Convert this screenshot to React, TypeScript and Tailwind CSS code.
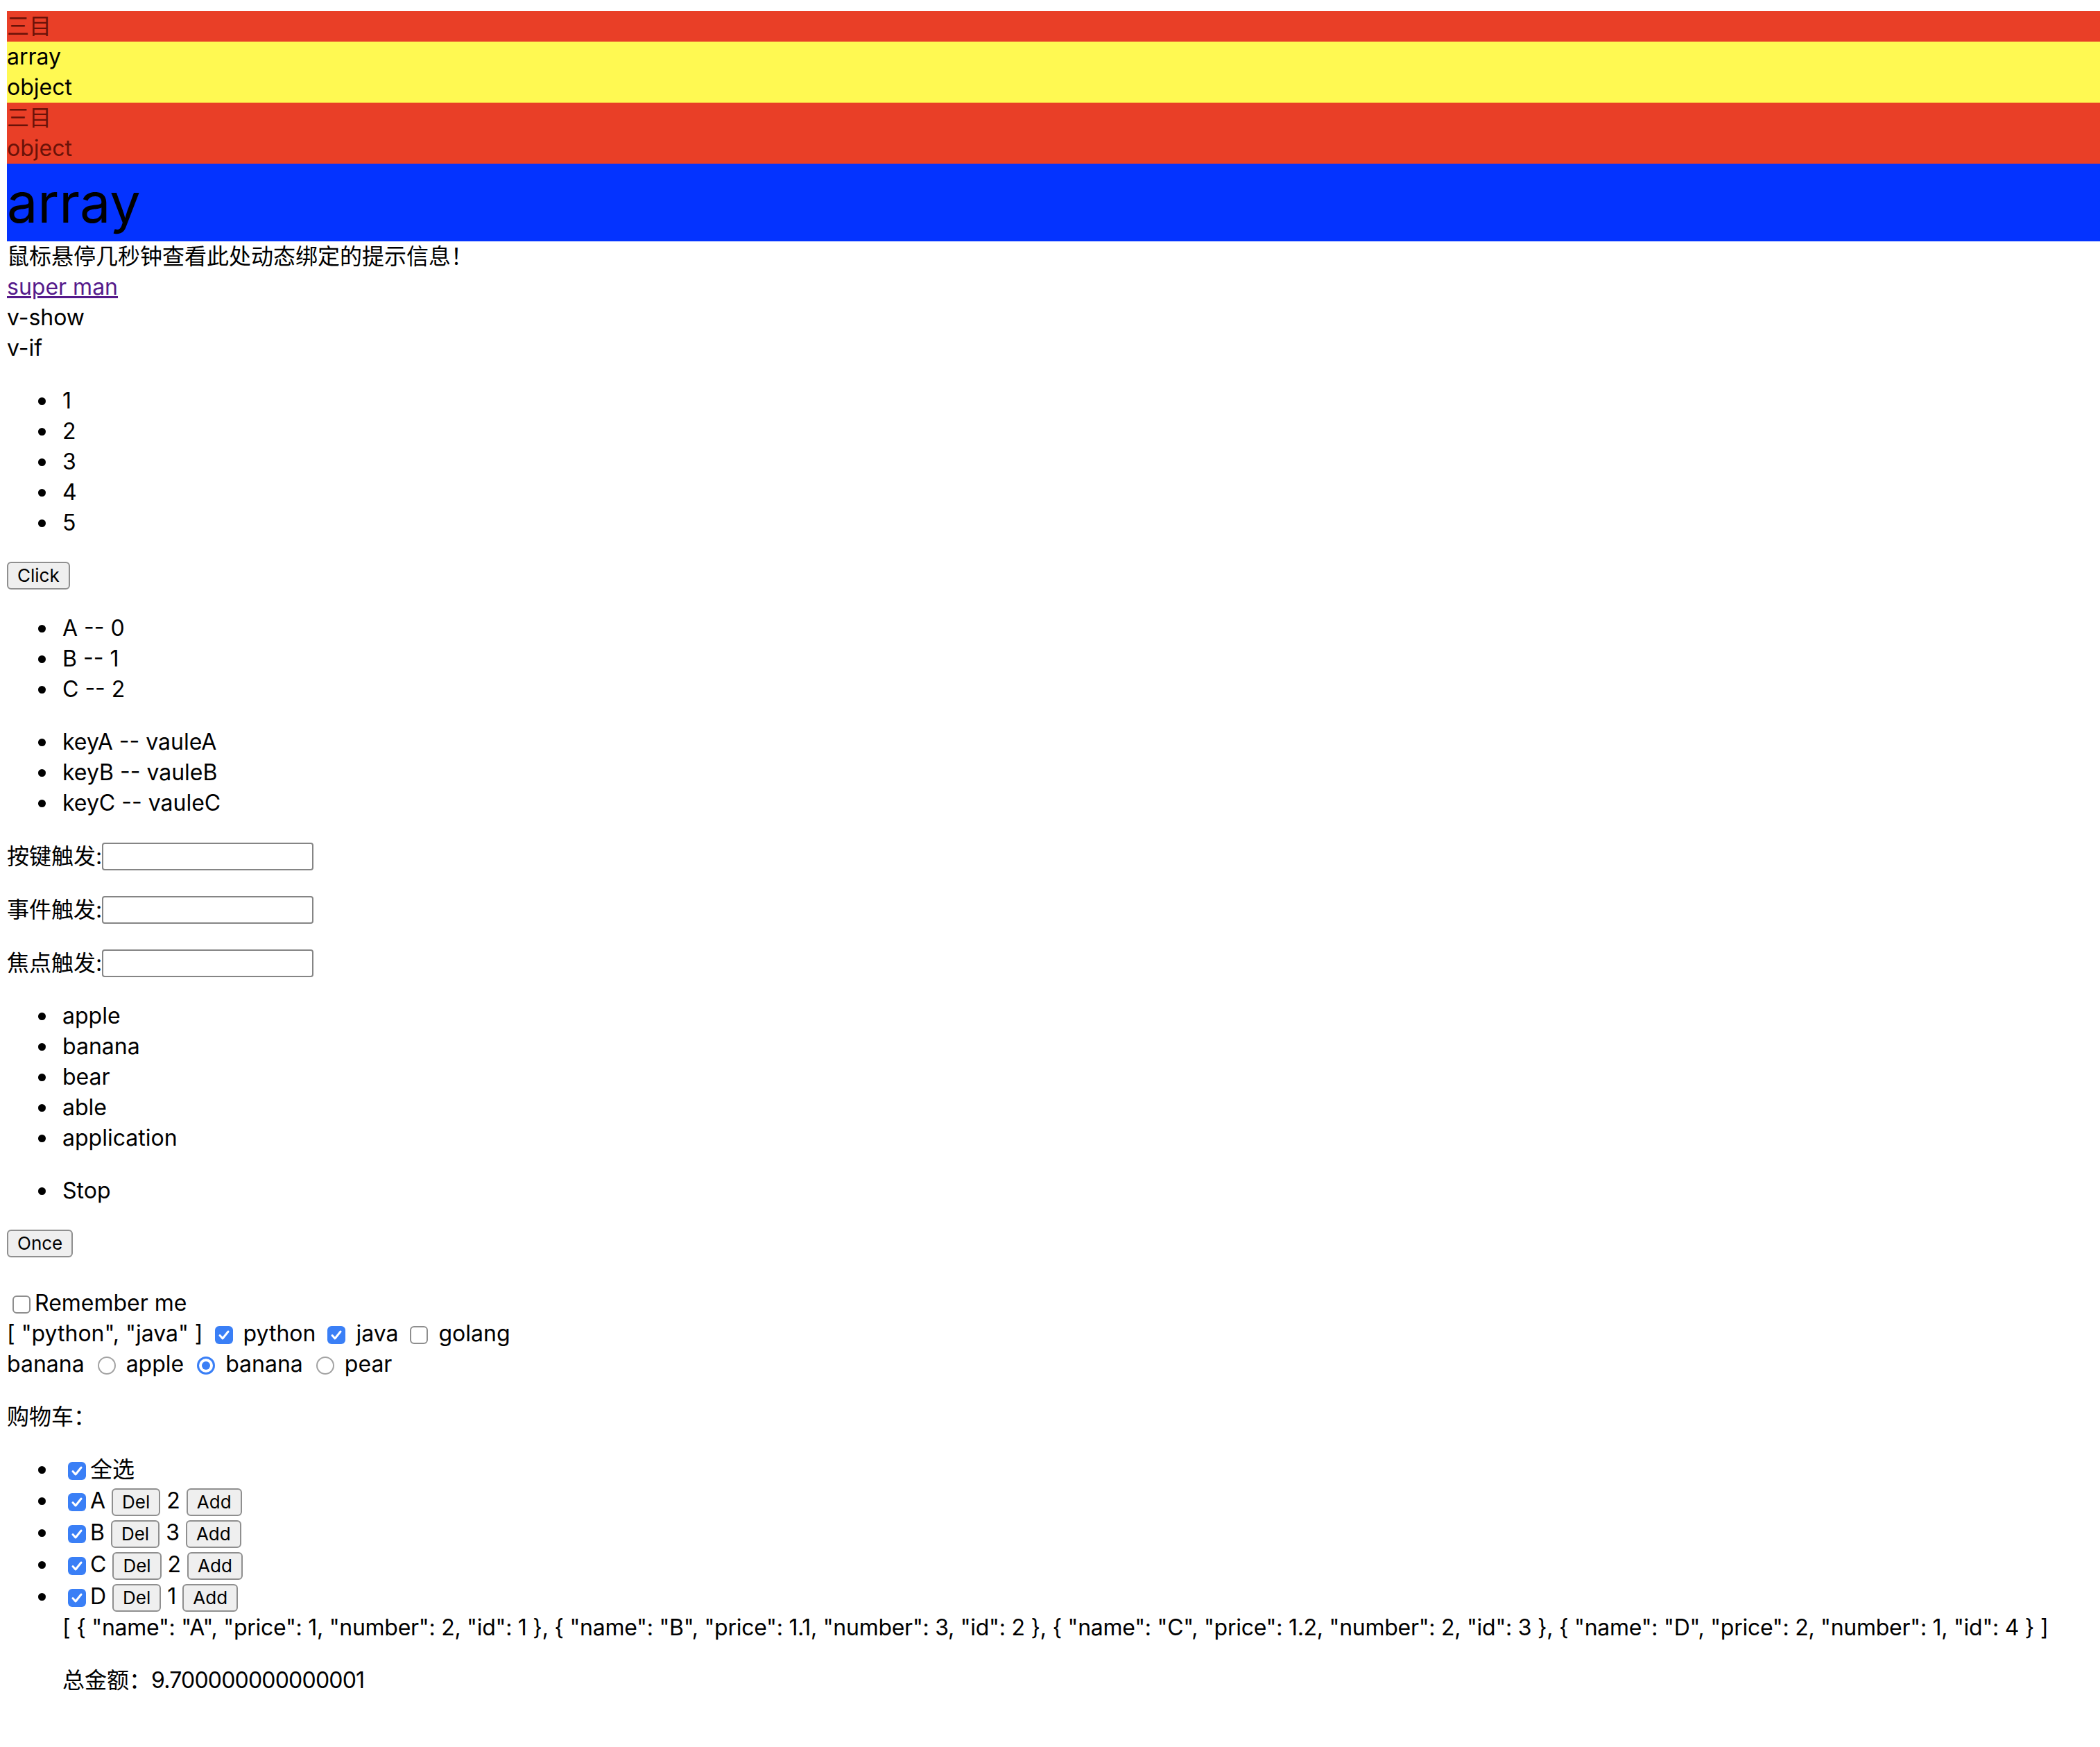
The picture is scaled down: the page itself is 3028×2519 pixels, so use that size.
import type { ReactNode } from 'react'

const cart = [
  { name: 'A', price: 1, number: 2, id: 1 },
  { name: 'B', price: 1.1, number: 3, id: 2 },
  { name: 'C', price: 1.2, number: 2, id: 3 },
  { name: 'D', price: 2, number: 1, id: 4 },
]

function Check({ checked = false }: { checked?: boolean }) {
  if (!checked) {
    return (
      <span className="ml-[8px] mr-[6px] inline-block h-[26px] w-[26px] rounded-[6px] border-2 border-[#8e8e8e] bg-white align-[-4px]" />
    )
  }
  return (
    <span className="ml-[8px] mr-[6px] inline-block h-[26px] w-[26px] rounded-[6px] bg-[#3a7ff6] align-[-4px]">
      <svg viewBox="0 0 26 26" className="block h-full w-full">
        <path
          d="M7 13.5l4 4.5 8-10"
          fill="none"
          stroke="white"
          strokeWidth="3"
          strokeLinecap="round"
          strokeLinejoin="round"
        />
      </svg>
    </span>
  )
}

function Radio({ checked = false }: { checked?: boolean }) {
  if (!checked) {
    return (
      <span className="ml-[10px] mr-[6px] inline-block h-[26px] w-[26px] rounded-full border-2 border-[#a3a3a3] bg-white align-[-4px]" />
    )
  }
  return (
    <span className="ml-[10px] mr-[6px] inline-block h-[26px] w-[26px] rounded-full border-[3px] border-[#3a7ff6] bg-white align-[-4px]">
      <span className="m-[4px] block h-[12px] w-[12px] rounded-full bg-[#3a7ff6]" />
    </span>
  )
}

function Btn({ children }: { children: ReactNode }) {
  return (
    <button className="inline-block h-[40px] rounded-[6px] border-2 border-[#8f8f8f] bg-[#efefef] px-[13px] align-middle text-[26px] leading-[34px] text-black">
      {children}
    </button>
  )
}

// list item with a round bullet hanging in the ul padding
function Li({ children, className = '' }: { children: ReactNode; className?: string }) {
  return (
    <li className={className}>
      <span className="-ml-[35px] mr-[24px] inline-block h-[11px] w-[11px] rounded-full bg-black align-[5px]" />
      {children}
    </li>
  )
}

function Field({ label }: { label: string }) {
  return (
    <p className="my-[32px] flex h-[45px] items-center">
      {label}
      <input className="h-[40px] w-[305px] rounded-[4px] border-2 border-[#858585] bg-white" />
    </p>
  )
}

export default function App() {
  const total = cart.reduce((sum, item) => sum + item.price * item.number, 0)

  return (
    <div className="min-h-screen bg-white pl-[10px] pt-[16px] pb-[60px] font-['Inter','Noto_Sans_CJK_SC',sans-serif] text-[32px] leading-[44px] text-black">
      <div className="bg-[#e93f27] text-[#6a1208]">三目</div>
      <div className="bg-[#fff952]">
        <div>array</div>
        <div>object</div>
      </div>
      <div className="bg-[#e93f27] text-[#6a1208]">
        <div>三目</div>
        <div>object</div>
      </div>
      <div className="bg-[#0433ff] text-[79px] leading-[112px]">array</div>

      <div>鼠标悬停几秒钟查看此处动态绑定的提示信息！</div>
      <div>
        <a href="#" className="text-[#551a8b] underline">
          super man
        </a>
      </div>
      <div>v-show</div>
      <div>v-if</div>

      <ul className="my-[32px] pl-[80px]">
        {[1, 2, 3, 4, 5].map((n) => (
          <Li key={n}>{n}</Li>
        ))}
      </ul>
      <div className="flex h-[44px] items-center">
        <Btn>Click</Btn>
      </div>
      <ul className="my-[32px] pl-[80px]">
        {['A', 'B', 'C'].map((k, i) => (
          <Li key={k}>
            {k} -- {i}
          </Li>
        ))}
      </ul>
      <ul className="my-[32px] pl-[80px]">
        {['A', 'B', 'C'].map((k) => (
          <Li key={k}>
            key{k} -- vaule{k}
          </Li>
        ))}
      </ul>

      <Field label="按键触发:" />
      <Field label="事件触发:" />
      <Field label="焦点触发:" />

      <ul className="my-[32px] pl-[80px]">
        {['apple', 'banana', 'bear', 'able', 'application'].map((w) => (
          <Li key={w}>{w}</Li>
        ))}
      </ul>
      <ul className="my-[32px] pl-[80px]">
        <Li>Stop</Li>
      </ul>
      <div className="mb-[42px] flex h-[44px] items-center">
        <Btn>Once</Btn>
      </div>

      <div>
        <Check />
        Remember me
      </div>
      <div>
        [ "python", "java" ] <Check checked /> python <Check checked /> java{' '}
        <Check /> golang
      </div>
      <div>
        banana <Radio /> apple <Radio checked /> banana <Radio /> pear
      </div>

      <p className="my-[32px]">购物车：</p>
      <ul className="my-[32px] pl-[80px]">
        <Li>
          <Check checked />
          全选
        </Li>
        {cart.map((item) => (
          <Li key={item.id} className="leading-[46px]">
            <Check checked />
            {item.name} <Btn>Del</Btn> {item.number} <Btn>Add</Btn>
          </Li>
        ))}
        <div className="tracking-[-0.27px]">
          [{' '}
          {cart
            .map(
              (c) =>
                `{ "name": "${c.name}", "price": ${c.price}, "number": ${c.number}, "id": ${c.id} }`,
            )
            .join(', ')}{' '}
          ]
        </div>
        <p className="my-[32px]">
          总金额：<span className="tracking-[-0.8px]">{total}</span>
        </p>
      </ul>
    </div>
  )
}
